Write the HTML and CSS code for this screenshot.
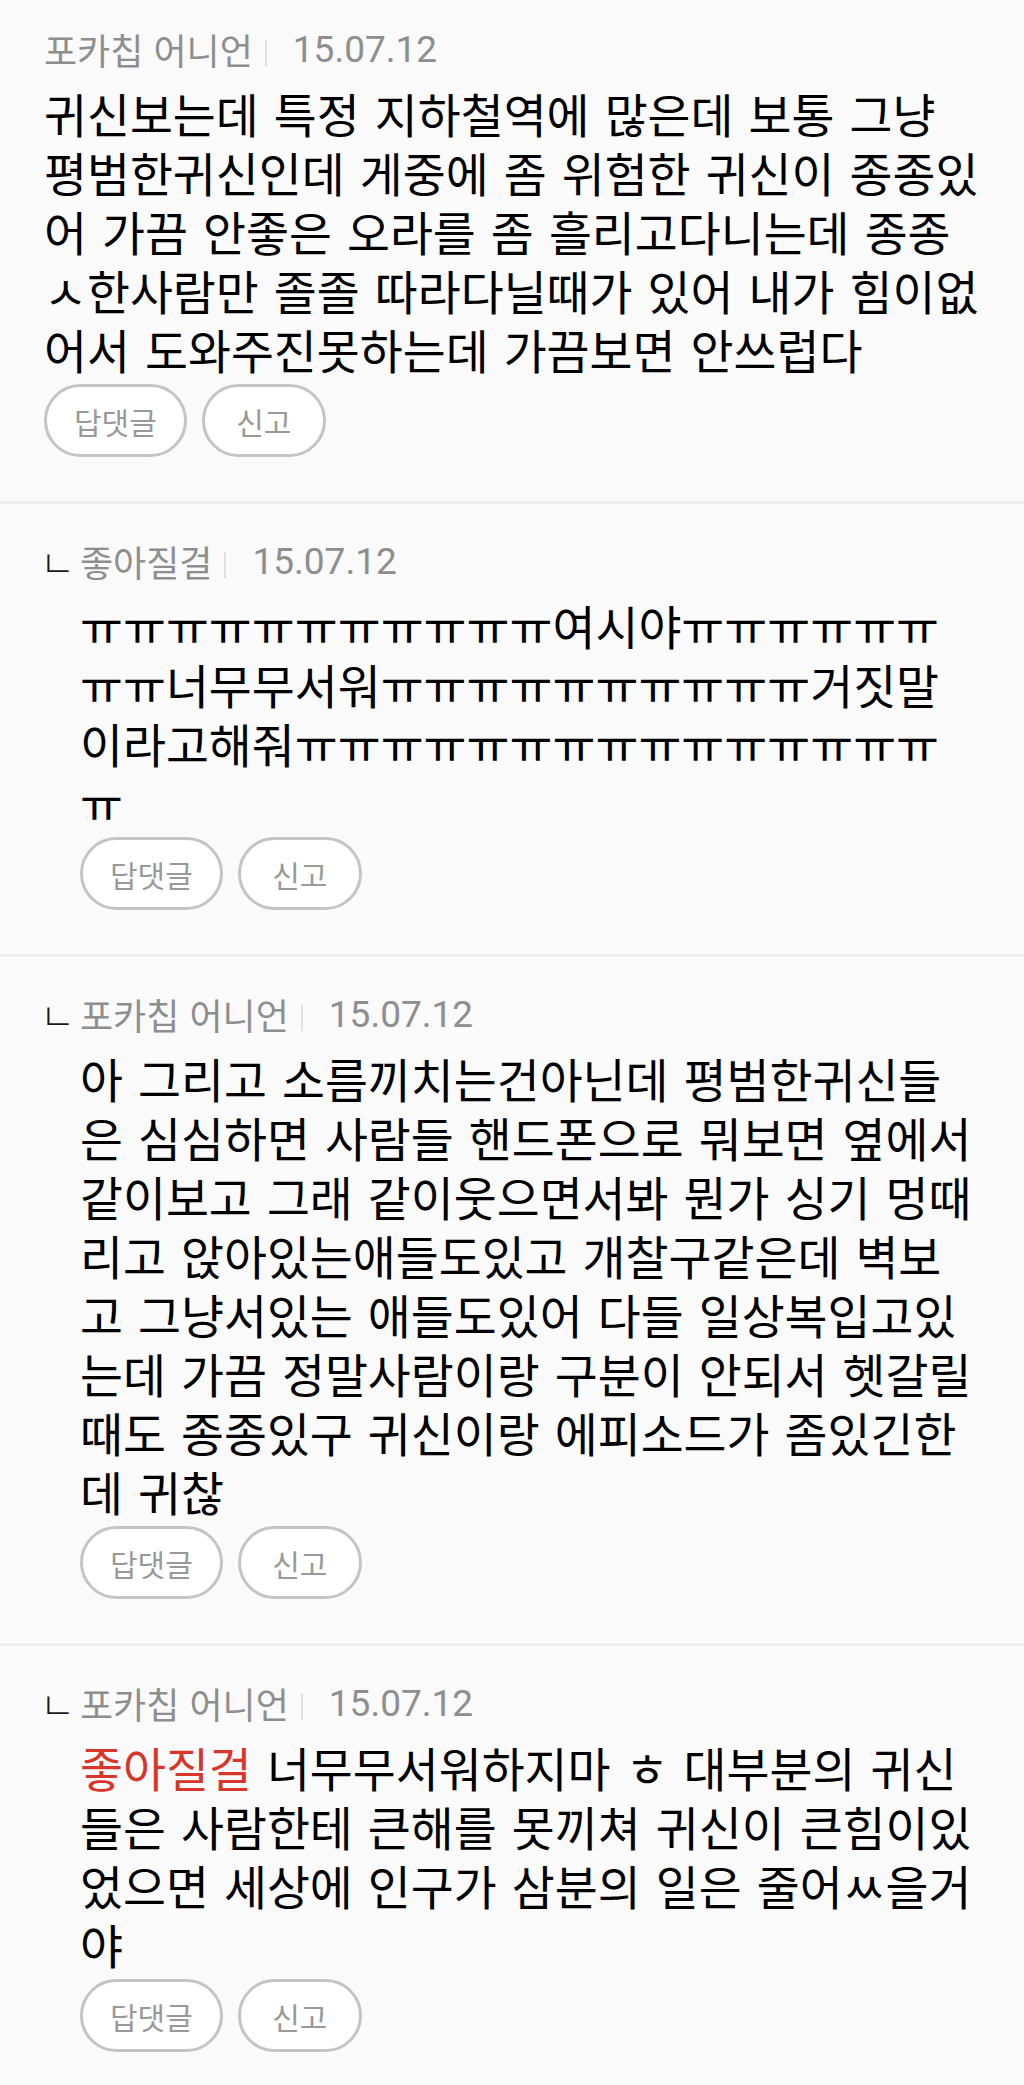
FILE: index.html
```html
<!DOCTYPE html>
<html lang="ko">
<head>
  <meta charset="UTF-8" />
  <meta name="viewport" content="width=device-width, initial-scale=1.0" />
  <title>댓글</title>
  <link rel="stylesheet" href="styles.css">
</head>
<body>
  <div class="comments">
    <div class="comment first">
      <div class="meta">
        <span class="nick">포카칩 어니언</span>
        <span class="bar"></span>
        <span class="date">15.07.12</span>
      </div>
      <p class="text">귀신보는데 특정 지하철역에 많은데 보통 그냥<br>평범한귀신인데 게중에 좀 위험한 귀신이 종종있<br>어 가끔 안좋은 오라를 좀 흘리고다니는데 종종<br>ㅅ한사람만 졸졸 따라다닐때가 있어 내가 힘이없<br>어서 도와주진못하는데 가끔보면 안쓰럽다</p>
      <div class="actions">
        <button class="pill">답댓글</button>
        <button class="pill">신고</button>
      </div>
    </div>

    <div class="comment reply">
      <div class="meta">
        <span class="mark">ㄴ</span>
        <span class="nick">좋아질걸</span>
        <span class="bar"></span>
        <span class="date">15.07.12</span>
      </div>
      <p class="text">ㅠㅠㅠㅠㅠㅠㅠㅠㅠㅠㅠ여시야ㅠㅠㅠㅠㅠㅠ<br>ㅠㅠ너무무서워ㅠㅠㅠㅠㅠㅠㅠㅠㅠㅠ거짓말<br>이라고해줘ㅠㅠㅠㅠㅠㅠㅠㅠㅠㅠㅠㅠㅠㅠㅠ<br>ㅠ</p>
      <div class="actions">
        <button class="pill">답댓글</button>
        <button class="pill">신고</button>
      </div>
    </div>

    <div class="comment reply">
      <div class="meta">
        <span class="mark">ㄴ</span>
        <span class="nick">포카칩 어니언</span>
        <span class="bar"></span>
        <span class="date">15.07.12</span>
      </div>
      <p class="text">아 그리고 소름끼치는건아닌데 평범한귀신들<br>은 심심하면 사람들 핸드폰으로 뭐보면 옆에서<br>같이보고 그래 같이웃으면서봐 뭔가 싱기 멍때<br>리고 앉아있는애들도있고 개찰구같은데 벽보<br>고 그냥서있는 애들도있어 다들 일상복입고있<br>는데 가끔 정말사람이랑 구분이 안되서 헷갈릴<br>때도 종종있구 귀신이랑 에피소드가 좀있긴한<br>데 귀찮</p>
      <div class="actions">
        <button class="pill">답댓글</button>
        <button class="pill">신고</button>
      </div>
    </div>

    <div class="comment reply">
      <div class="meta">
        <span class="mark">ㄴ</span>
        <span class="nick">포카칩 어니언</span>
        <span class="bar"></span>
        <span class="date">15.07.12</span>
      </div>
      <p class="text"><span class="mention">좋아질걸</span> 너무무서워하지마 ㅎ 대부분의 귀신<br>들은 사람한테 큰해를 못끼쳐 귀신이 큰힘이있<br>었으면 세상에 인구가 삼분의 일은 줄어ㅆ을거<br>야</p>
      <div class="actions">
        <button class="pill">답댓글</button>
        <button class="pill">신고</button>
      </div>
    </div>
  </div>
</body>
</html>
```

FILE: styles.css
```css
body {
  margin: 0;
  background: #fafafa;
  font-family: 'Noto Sans CJK KR', 'Noto Sans', sans-serif;
  color: #000;
}
.comment {
  padding: 33px 34px 44px 44px;
  border-bottom: 3px solid #eeeeee;
}
.comment.first {
  padding-top: 25px;
}
.comment.reply {
  padding-left: 80px;
}
.meta {
  display: flex;
  align-items: center;
  height: 48px;
  color: #8e8e8e;
}
.mark {
  width: 40px;
  margin-left: -40px;
  font-size: 38px;
  font-weight: 300;
  line-height: 1;
  color: #1a1a1a;
}
.nick {
  font-size: 36px;
}
.bar {
  width: 2px;
  height: 26px;
  margin: 8px 26px 0 12px;
  background: #e0e0e0;
}
.date {
  font-family: Roboto, 'Noto Sans', sans-serif;
  font-size: 37px;
}
.text {
  margin: 10px 0 0;
  font-size: 46.7px;
  line-height: 59px;
  word-spacing: 2px;
  white-space: nowrap;
}
.mention {
  color: #d8352b;
}
.actions {
  display: flex;
  gap: 15px;
  margin-top: 6px;
}
.pill {
  display: flex;
  align-items: center;
  justify-content: center;
  box-sizing: border-box;
  height: 73px;
  min-width: 124px;
  padding: 0 27px;
  background: #fff;
  border: 3px solid #c4c4c4;
  border-radius: 37px;
  font-family: 'Noto Sans CJK KR', sans-serif;
  font-size: 30px;
  color: #999;
  cursor: pointer;
}
```
